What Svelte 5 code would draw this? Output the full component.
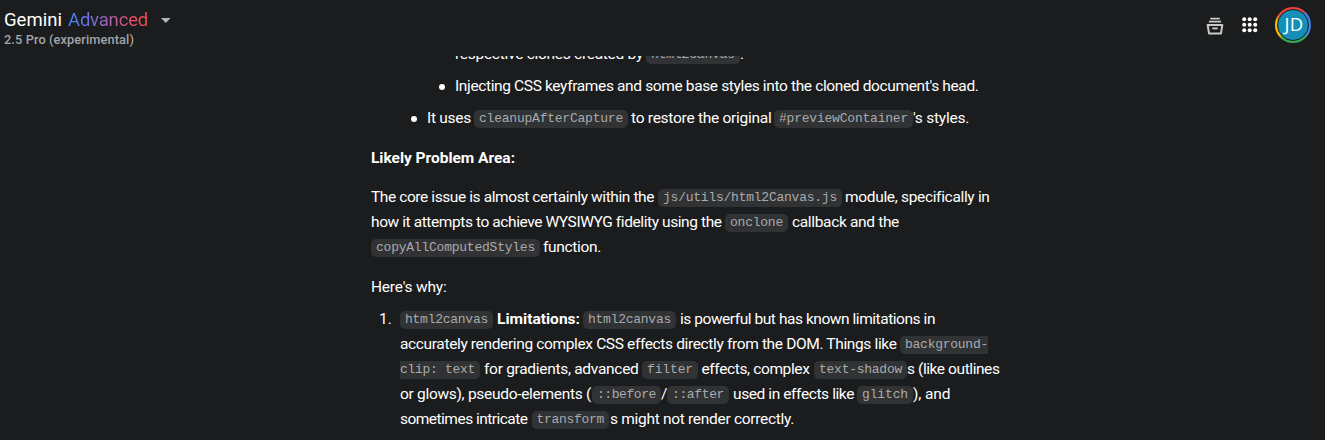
<script>
  // Each run: [kind, text, gap before, width]. Kinds: t = text, b = bold, c = code,
  // cl = code broken at its right edge, cr = code continued from the line above.
  const blocks = [
    { cls: 'nested', lines: [[['t', 'respective clones created by', 0, 188], ['c', 'html2canvas', 3, 94], ['t', '.', 0, 4]]] },
    { cls: 'nested bullet', lines: [[['t', "Injecting CSS keyframes and some base styles into the cloned document's head.", 0, 523.5]]] },
    { cls: 'item bullet', lines: [[['t', 'It uses', 0, 44], ['c', 'cleanupAfterCapture', 3, 154], ['t', 'to restore the original', 3, 140.5], ['c', '#previewContainer', 2.5, 139], ['t', "'s styles.", 0, 56]]] },
    { cls: 'heading', lines: [[['b', 'Likely Problem Area:', 0, 144]]] },
    { cls: 'para', lines: [
      [['t', 'The core issue is almost certainly within the', 0, 283], ['c', 'js/utils/html2Canvas.js', 4, 184], ['t', 'module, specifically in', 3, 144]],
      [['t', 'how it attempts to achieve WYSIWYG fidelity using the', 0, 350], ['c', 'onclone', 4, 63], ['t', 'callback and the', 4, 107]],
      [['c', 'copyAllComputedStyles', 0, 169], ['t', 'function.', 3, 58]]
    ] },
    { cls: 'why', lines: [[['t', "Here's why:", 0, 75.5]]] },
    { cls: 'numbered', lines: [
      [['c', 'html2canvas', 0, 93], ['b', 'Limitations:', 4, 83], ['c', 'html2canvas', 3, 93], ['t', 'is powerful but has known limitations in', 4, 255]],
      [['t', 'accurately rendering complex CSS effects directly from the DOM. Things like', 0, 496.5], ['cl', 'background-', 3.5, 88]],
      [['cr', 'clip: text', 0, 80], ['t', 'for gradients, advanced', 4, 154.5], ['c', 'filter', 3.5, 56], ['t', 'effects, complex', 3.5, 108], ['c', 'text-shadow', 4.5, 93], ['t', 's (like outlines', 0, 92.5]],
      [['t', 'or glows), pseudo-elements (', 0, 191], ['c', '::before', 1, 69], ['t', '/', 0, 6], ['c', '::after', 0, 62], ['t', 'used in effects like', 4, 121], ['c', 'glitch', 3, 56], ['t', '), and', 0, 37.5]],
      [['t', 'sometimes intricate', 0, 127.5], ['c', 'transform', 4, 77.5], ['t', 's might not render correctly.', 1, 184]]
    ] }
  ];
  const dots = [0, 1, 2, 3, 4, 5, 6, 7, 8];

  // Spreads the letters of a run over the width it is given.
  function fit(node, width) {
    const range = document.createRange();
    range.selectNodeContents(node);
    const natural = range.getBoundingClientRect().width;
    node.style.letterSpacing = (width - natural) / node.textContent.length + 'px';
  }
  function room(kind, width) {
    if (kind === 'c') return width - 10;
    if (kind === 'cl' || kind === 'cr') return width - 5;
    return width;
  }
</script>

<div class="app">
  <header>
    <div class="brand">
      <div class="title">
        <span class="gem" use:fit={58}>Gemini</span>
        <span class="adv" use:fit={80}>Advanced</span>
        <svg class="caret" width="10" height="5" viewBox="0 0 10 5"><path d="M0 0h9.6L4.8 5z" fill="#b4b8bb" /></svg>
      </div>
      <div class="model"><span use:fit={130}>2.5 Pro (experimental)</span></div>
    </div>
    <div class="tools">
      <svg width="18" height="18" viewBox="0 0 18 18" fill="none" stroke="#c8c9ca">
        <path d="M4.2 1.6h9.6M2.9 4.6h12.2" stroke-width="1.6" />
        <path d="M1.7 8h14.6L15 16.4H3z" stroke-width="2" stroke-linejoin="round" />
        <path d="M6.3 11.4h5.4" stroke-width="1.9" />
      </svg>
      <svg class="grid" width="16" height="16" viewBox="0 0 16 16" fill="#fff">
        {#each dots as d}
          <circle cx={2.2 + (d % 3) * 5.5} cy={2.2 + Math.floor(d / 3) * 5.5} r="2" />
        {/each}
      </svg>
      <div class="ring"><div class="avatar"><span use:fit={19}>JD</span></div></div>
    </div>
  </header>
  <main>
    {#each blocks as block}
      <div class="block {block.cls}">
        {#if block.cls === 'numbered'}<span class="num">1.</span>{/if}
        <div class="lines">
          {#each block.lines as line}
            <div class="line">
              {#each line as [kind, text, gap, width]}
                <span class="run {kind}" style="margin-left:{gap}px;width:{width}px"><span use:fit={room(kind, width)}>{text}</span></span>
              {/each}
            </div>
          {/each}
        </div>
      </div>
    {/each}
  </main>
</div>

<style>
  :global(body) { margin: 0; background: #1b1c1d; }
  .app {
    width: 1325px; height: 440px; overflow: hidden; background: #1b1c1d; color: #fff;
    font-family: Roboto, sans-serif; display: flex; flex-direction: column;
  }
  header { height: 56px; flex: none; display: flex; justify-content: space-between; }
  .brand { padding: 8px 0 0 4px; }
  .title { display: flex; align-items: center; height: 24px; font-size: 18.5px; line-height: 24px; white-space: nowrap; }
  .gem { width: 58px; }
  .adv {
    width: 80px; margin-left: 6px; color: transparent;
    background: linear-gradient(90deg, #4285f4 0%, #5a78f0 18%, #9168c8 42%, #c05a94 62%, #ee4e5e 85%, #f04a58 100%);
    background-clip: text; -webkit-background-clip: text;
  }
  .caret { margin-left: 13px; margin-top: 1px; }
  .model { height: 16px; font-size: 12.8px; line-height: 16px; font-weight: 500; color: #a2a5a8; white-space: nowrap; }
  .tools { display: flex; align-items: center; height: 50px; padding-right: 14px; }
  .tools svg { margin-top: 2px; }
  .tools .grid { margin: 0 17px 0 18px; }
  .ring {
    width: 36px; height: 36px; border-radius: 50%; display: flex; align-items: center; justify-content: center;
    background: conic-gradient(#ea4335 0 35deg, #4285f4 50deg 120deg, #34a853 140deg 215deg, #fbbc04 235deg 285deg, #ea4335 305deg);
  }
  .avatar {
    box-sizing: border-box; width: 32px; height: 32px; border: 1.5px solid #1b1c1d; border-radius: 50%; background: #148fb8;
    display: flex; align-items: center; justify-content: center; font: 18.5px/28px 'Open Sans', sans-serif; white-space: nowrap;
  }
  .avatar span { padding: 0 0 2px 2px; }
  main { height: 384px; overflow: hidden; font-size: 15.5px; line-height: 25px; padding-left: 371px; }
  .block { position: relative; display: flex; }
  .nested { margin-left: 84px; margin-bottom: 7px; }
  .block:first-child { margin-top: -15px; }
  .item { margin-left: 56px; }
  .bullet::before {
    content: ''; position: absolute; left: -16px; top: 11px; width: 6px; height: 6px; border-radius: 50%; background: #fff;
  }
  .heading { margin-top: 15px; }
  .para { margin-top: 14px; }
  .why { margin-top: 15px; }
  .numbered { margin-top: 7px; }
  .num { width: 21px; padding-left: 8px; padding-top: 1px; }
  .line { display: flex; height: 25px; white-space: nowrap; }
  .run { flex: none; box-sizing: border-box; padding-top: 1px; }
  .b { font-weight: 700; }
  .c, .cl, .cr {
    height: 18px; margin-top: 5px; padding: 0 0 0 5px; border-radius: 5px; background: #303234; color: #a9abad;
    font: 13px/17px 'Liberation Mono', monospace;
  }
  .cl { border-radius: 5px 0 0 5px; }
  .cr { border-radius: 0 5px 5px 0; padding-left: 0; }
</style>
